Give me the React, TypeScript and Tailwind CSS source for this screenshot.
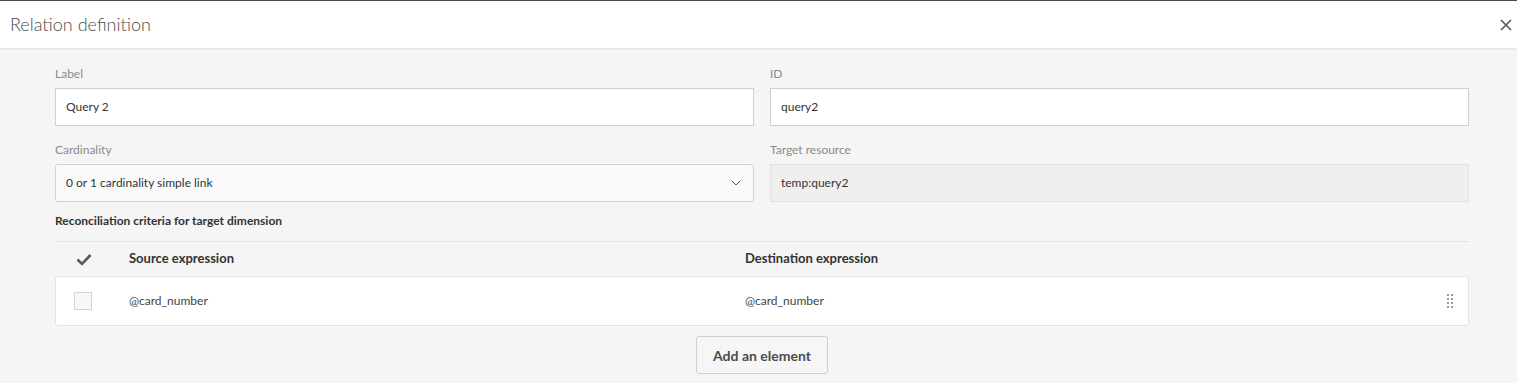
import { ChevronDown } from "lucide-react";

const font = { fontFamily: "Lato, 'Open Sans', sans-serif" };

function FieldLabel({ children }: { children: string }) {
  return <p className="h-4 text-[12px] leading-4 text-[#8a8a8a]">{children}</p>;
}

function DragHandle() {
  return (
    <div className="grid grid-cols-2 gap-x-[2px] gap-y-[2px]">
      {Array.from({ length: 8 }).map((_, i) => (
        <span key={i} className="h-[2px] w-[2px] bg-[#9a9a9a]" />
      ))}
    </div>
  );
}

export default function App() {
  return (
    <div className="h-[383px] w-full overflow-hidden bg-[#f5f5f5]" style={font}>
      <div className="flex h-[50px] items-center justify-between border-t border-b-2 border-t-[#4a4a4a] border-b-[#e8e8e8] bg-white pl-[10px] pr-[4px]">
        <h1 className="text-[18px] font-light text-[#4b4b4b]">Relation definition</h1>
        <svg width="12" height="12" viewBox="0 0 12 12" className="mr-[1px]">
          <path d="M1 1 L11 11 M11 1 L1 11" stroke="#555" strokeWidth="1.6" />
        </svg>
      </div>

      <div className="pl-[55px] pr-[48px] pt-4">
        <div className="grid grid-cols-2 gap-x-[16px]">
          <div>
            <FieldLabel>Label</FieldLabel>
            <div className="mt-[6px] flex h-[38px] items-center border border-[#cfcfcf] bg-white px-[10px] text-[12px] text-[#333]">
              Query 2
            </div>
          </div>
          <div>
            <FieldLabel>ID</FieldLabel>
            <div className="mt-[6px] flex h-[38px] items-center border border-[#cfcfcf] bg-white px-[10px] text-[12px] text-[#333]">
              query2
            </div>
          </div>
          <div className="mt-4">
            <FieldLabel>Cardinality</FieldLabel>
            <div className="mt-[6px] flex h-[38px] items-center justify-between rounded-[3px] border border-[#d3d3d3] bg-[#fafafa] pl-[10px] pr-[9px] text-[12px] text-[#333]">
              <span>0 or 1 cardinality simple link</span>
              <ChevronDown className="size-[16px] text-[#555]" strokeWidth={1.5} />
            </div>
          </div>
          <div className="mt-4">
            <FieldLabel>Target resource</FieldLabel>
            <div className="mt-[6px] flex h-[38px] items-center border border-[#e2e2e2] bg-[#efefef] px-[10px] text-[12px] text-[#333]">
              temp:query2
            </div>
          </div>
        </div>

        <p className="mt-[11px] h-4 text-[12px] font-bold leading-4 text-[#333]">
          Reconciliation criteria for target dimension
        </p>

        <div className="mt-3 border-t border-[#e5e5e5]">
          <div className="flex h-[34px] items-center text-[13px] font-bold text-[#333]">
            <div className="w-[74px] pl-[21px]">
              <svg width="16" height="13" viewBox="0 0 16 13" className="block">
                <path d="M1.5 6.5 L6 11 L14.5 2" fill="none" stroke="#5a5a5a" strokeWidth="2.6" />
              </svg>
            </div>
            <div className="w-[616px]">Source expression</div>
            <div>Destination expression</div>
          </div>

          <div className="flex h-[50px] items-center rounded-[3px] border border-[#e3e3e3] bg-white text-[12px] text-[#444]">
            <div className="w-[73px] pl-[18px]">
              <span className="block h-[18px] w-[18px] border border-[#d3d3d3] bg-[#f7f7f7]" />
            </div>
            <div className="w-[616px]">@card_number</div>
            <div className="flex-1">@card_number</div>
            <div className="pr-[15px]">
              <DragHandle />
            </div>
          </div>
        </div>

        <div className="mt-[10px] flex justify-center">
          <button className="h-[38px] w-[132px] rounded-[3px] border border-[#d0d0d0] bg-[#f6f6f6] text-[14px] font-bold text-[#4b4b4b]">
            Add an element
          </button>
        </div>
      </div>
    </div>
  );
}
